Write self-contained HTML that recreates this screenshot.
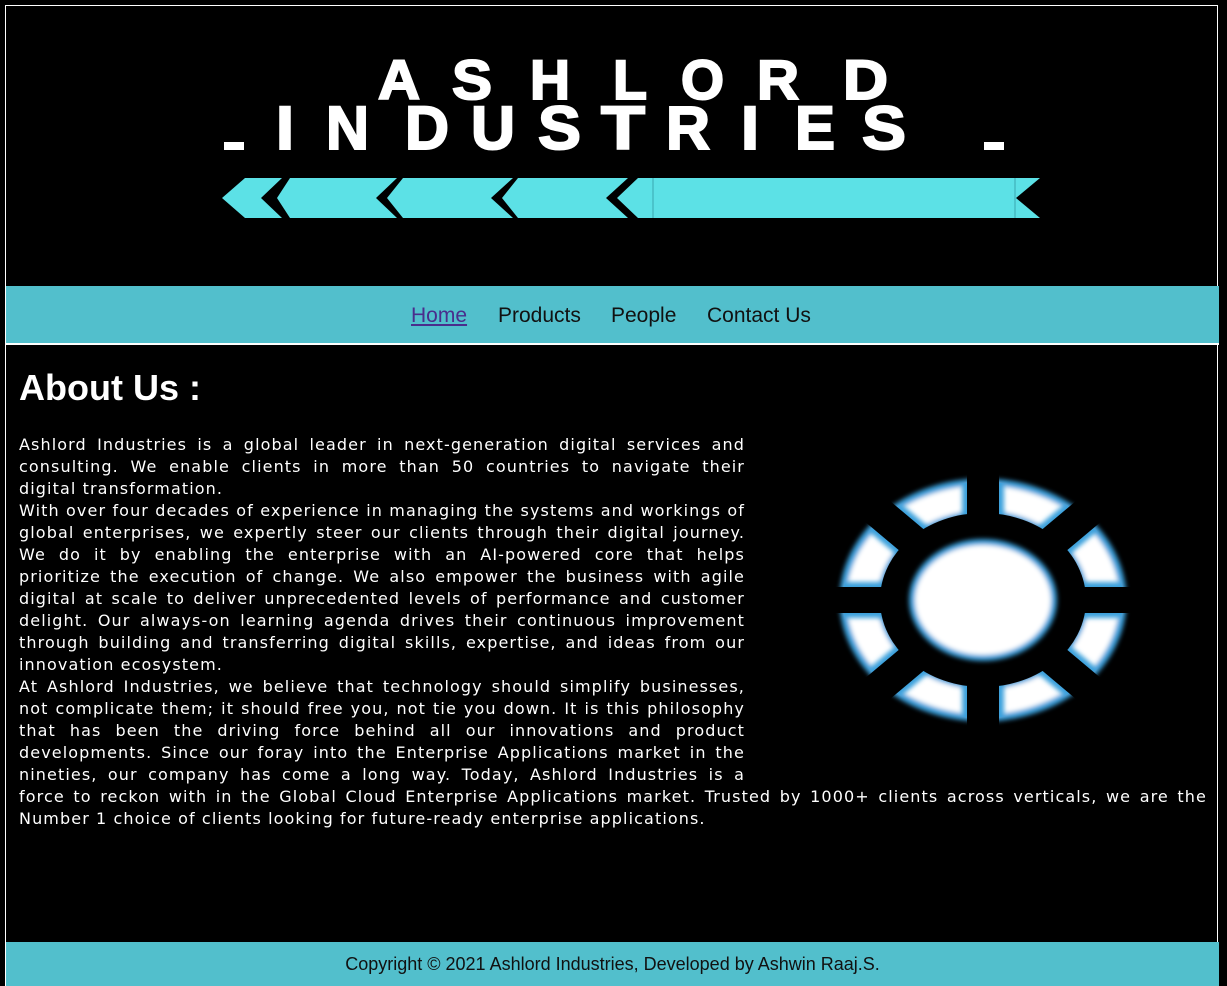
<!DOCTYPE html>
<html><head><meta charset="utf-8"><style>
html,body{margin:0;padding:0;background:#000;width:1227px;height:986px;overflow:hidden;position:relative}
.frame{position:absolute;left:5px;top:5px;width:1213px;height:990px;border:1px solid #fff;box-sizing:border-box;background:#000}
.nav{position:absolute;left:6px;top:286px;width:1213px;height:57px;background:#52bfcc;border-bottom:2px solid #fff;font:21px "Liberation Sans",sans-serif;color:#111}
.nav span{position:absolute;top:18px}
.nav .home{color:#4a2d8c;text-decoration:underline}
h1{position:absolute;left:19px;top:367px;margin:0;font:bold 36px "Liberation Sans",sans-serif;color:#fff}
.txt{position:absolute;left:19px;top:434px;width:1188px;font:16px/22px "DejaVu Sans",sans-serif;letter-spacing:1.1px;color:#fff;text-align:justify;margin:0}
.fl{float:right;width:460px;height:344px;margin-left:2px;position:relative}
.footer{position:absolute;left:6px;top:942px;width:1213px;height:44px;background:#52bfcc;font:18px "Liberation Sans",sans-serif;color:#111;text-align:center;line-height:44px}
</style></head><body>
<div class="frame"></div>
<svg style="position:absolute;left:0;top:0" width="1227" height="290">
<g font-family="Liberation Sans,sans-serif" font-weight="bold" fill="#fff" stroke="#fff" stroke-width="2" lengthAdjust="spacingAndGlyphs">
<g font-size="56">
<text x="378" y="99" textLength="42" lengthAdjust="spacingAndGlyphs">A</text>
<text x="452" y="99" textLength="40" lengthAdjust="spacingAndGlyphs">S</text>
<text x="530" y="99" textLength="40" lengthAdjust="spacingAndGlyphs">H</text>
<text x="613" y="99" textLength="34" lengthAdjust="spacingAndGlyphs">L</text>
<text x="681" y="99" textLength="43" lengthAdjust="spacingAndGlyphs">O</text>
<text x="757" y="99" textLength="42" lengthAdjust="spacingAndGlyphs">R</text>
<text x="843" y="99" textLength="45" lengthAdjust="spacingAndGlyphs">D</text>
</g>
<g font-size="61">
<text x="276" y="149" textLength="18" lengthAdjust="spacingAndGlyphs">I</text>
<text x="326" y="149" textLength="43" lengthAdjust="spacingAndGlyphs">N</text>
<text x="405" y="149" textLength="44" lengthAdjust="spacingAndGlyphs">D</text>
<text x="471" y="149" textLength="44" lengthAdjust="spacingAndGlyphs">U</text>
<text x="538" y="149" textLength="43" lengthAdjust="spacingAndGlyphs">S</text>
<text x="601" y="149" textLength="44" lengthAdjust="spacingAndGlyphs">T</text>
<text x="666" y="149" textLength="44" lengthAdjust="spacingAndGlyphs">R</text>
<text x="741" y="149" textLength="18" lengthAdjust="spacingAndGlyphs">I</text>
<text x="795" y="149" textLength="40" lengthAdjust="spacingAndGlyphs">E</text>
<text x="862" y="149" textLength="44" lengthAdjust="spacingAndGlyphs">S</text>
</g>
</g>
<rect x="224" y="142" width="20" height="8" fill="#fff"/>
<rect x="984" y="142" width="20" height="8" fill="#fff"/>
<g fill="#5ce1e6">
<polygon points="222,198 245,178 282,178 261,198 282,218 245,218"/>
<polygon points="277,198 290,178 397,178 376,198 397,218 290,218"/>
<polygon points="387,198 403,178 513,178 491,198 513,218 403,218"/>
<polygon points="502,198 518,178 628,178 606,198 628,218 518,218"/>
<polygon points="617,198 638,178 1040,178 1016,198 1040,218 638,218"/>
</g>
<line x1="653" y1="178" x2="653" y2="218" stroke="#3aa8b0" stroke-width="1"/>
<line x1="1015" y1="178" x2="1015" y2="218" stroke="#3aa8b0" stroke-width="1"/>
</svg>
<div class="nav"><span class="home" style="left:405px">Home</span><span style="left:492px">Products</span><span style="left:605px">People</span><span style="left:701px">Contact Us</span></div>
<h1>About Us :</h1>
<div class="txt"><div class="fl">
<svg width="460" height="344" style="position:absolute;left:0;top:0">
<defs><filter id="b"><feGaussianBlur stdDeviation="2.5"/></filter>
<mask id="ring"><path d="M96,166 a140,118 0 1,0 280,0 a140,118 0 1,0 -280,0 Z M134,166 a102,86 0 1,1 204,0 a102,86 0 1,1 -204,0 Z" fill-rule="evenodd" fill="#fff"/></mask></defs>
<path d="M96,166 a140,118 0 1,0 280,0 a140,118 0 1,0 -280,0 Z M134,166 a102,86 0 1,1 204,0 a102,86 0 1,1 -204,0 Z" fill-rule="evenodd" fill="#fff" stroke="#3aa0dc" stroke-width="7" filter="url(#b)"/>
<g mask="url(#ring)"><g stroke="#3aa0dc" filter="url(#b)"><line x1="236" y1="0" x2="236" y2="344" stroke-width="42"/><line x1="0" y1="166" x2="460" y2="166" stroke-width="36"/>
<line x1="86" y1="40" x2="386" y2="292" stroke-width="42"/><line x1="386" y1="40" x2="86" y2="292" stroke-width="42"/></g></g>
<g stroke="#000"><line x1="236" y1="0" x2="236" y2="344" stroke-width="32"/><line x1="0" y1="166" x2="460" y2="166" stroke-width="26"/>
<line x1="86" y1="40" x2="386" y2="292" stroke-width="32"/><line x1="386" y1="40" x2="86" y2="292" stroke-width="32"/></g>
<ellipse cx="236" cy="166" rx="103" ry="87" fill="#000"/>
<ellipse cx="236" cy="166" rx="71" ry="58" fill="#fff" stroke="#3aa0dc" stroke-width="6" filter="url(#b)"/>
</svg></div>Ashlord Industries is a global leader in next-generation digital services and consulting. We enable clients in more than 50 countries to navigate their digital transformation.<br>With over four decades of experience in managing the systems and workings of global enterprises, we expertly steer our clients through their digital journey. We do it by enabling the enterprise with an AI-powered core that helps prioritize the execution of change. We also empower the business with agile digital at scale to deliver unprecedented levels of performance and customer delight. Our always-on learning agenda drives their continuous improvement through building and transferring digital skills, expertise, and ideas from our innovation ecosystem.<br>At Ashlord Industries, we believe that technology should simplify businesses, not complicate them; it should free you, not tie you down. It is this philosophy that has been the driving force behind all our innovations and product developments. Since our foray into the Enterprise Applications market in the nineties, our company has come a long way. Today, Ashlord Industries is a force to reckon with in the Global Cloud Enterprise Applications market. Trusted by 1000+ clients across verticals, we are the Number 1 choice of clients looking for future-ready enterprise applications.</div>
<div class="footer">Copyright © 2021 Ashlord Industries, Developed by Ashwin Raaj.S.</div>
</body></html>
